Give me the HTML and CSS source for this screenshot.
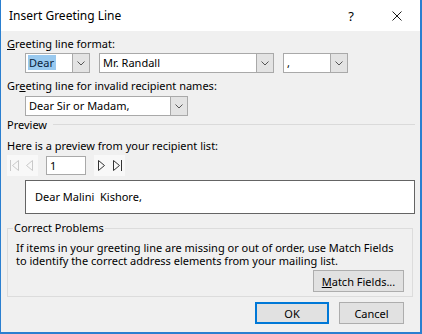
FILE: index.html
```html
<!DOCTYPE html>
<html>
    <head>
        <meta charset="utf-8">
        <link rel="stylesheet" href="styles.css">
        <title>Insert Greeting Line</title>
    </head>
    <body>
        <div class="dialog">

            <div class="titlebar">
                <span class="title">Insert Greeting Line</span>
                <span class="caption-btn">?</span>
                <span class="caption-btn">
                    <svg width="10" height="10" viewBox="0 0 10 10"><path d="M0.5,0.5 L9.5,9.5 M9.5,0.5 L0.5,9.5" stroke="#1a1a1a" stroke-width="1" fill="none"/></svg>
                </span>
            </div>

            <div class="content">
                <div class="label label-top"><u>G</u>reeting line format:</div>
                <div class="combo-row">
                    <div class="combo combo-salutation">
                        <span class="combo-text"><span class="selected">Dear</span></span>
                        <span class="combo-btn"><svg width="8" height="5" viewBox="0 0 8 5"><polyline points="0.5,0.5 4,4 7.5,0.5" stroke="#555" fill="none"/></svg></span>
                    </div>
                    <div class="combo combo-name">
                        <span class="combo-text">Mr. Randall</span>
                        <span class="combo-btn"><svg width="8" height="5" viewBox="0 0 8 5"><polyline points="0.5,0.5 4,4 7.5,0.5" stroke="#555" fill="none"/></svg></span>
                    </div>
                    <div class="combo combo-punct">
                        <span class="combo-text">,</span>
                        <span class="combo-btn"><svg width="8" height="5" viewBox="0 0 8 5"><polyline points="0.5,0.5 4,4 7.5,0.5" stroke="#555" fill="none"/></svg></span>
                    </div>
                </div>

                <div class="label label-invalid">Gr<u>e</u>eting line for invalid recipient names:</div>
                <div class="combo-row combo-row-invalid">
                    <div class="combo combo-invalid">
                        <span class="combo-text">Dear Sir or Madam,</span>
                        <span class="combo-btn"><svg width="8" height="5" viewBox="0 0 8 5"><polyline points="0.5,0.5 4,4 7.5,0.5" stroke="#555" fill="none"/></svg></span>
                    </div>
                </div>

                <div class="section-head">Preview</div>
                <div class="label label-preview">Here is a preview from your recipient list:</div>

                <div class="nav">
                    <div class="nav-group nav-back">
                        <svg width="9" height="11" viewBox="0 0 9 11"><path d="M0.5,0 V11 M8.5,0.5 L2.5,5.5 L8.5,10.5 Z" stroke="#c9c9c9" fill="none"/></svg>
                        <svg width="7" height="11" viewBox="0 0 7 11"><path d="M6.5,0.5 L0.5,5.5 L6.5,10.5 Z" stroke="#c9c9c9" fill="none"/></svg>
                    </div>
                    <div class="page-box">1</div>
                    <div class="nav-group nav-forward">
                        <svg width="7" height="11" viewBox="0 0 7 11"><path d="M0.5,0.5 L6.5,5.5 L0.5,10.5 Z" stroke="#333" fill="none"/></svg>
                        <svg width="9" height="11" viewBox="0 0 9 11"><path d="M0.5,0.5 L6.5,5.5 L0.5,10.5 Z M8.5,0 V11" stroke="#333" fill="none"/></svg>
                    </div>
                </div>

                <div class="preview">Dear Malini&nbsp; Kishore,</div>

                <fieldset class="group">
                    <legend>Correct Problems</legend>
                    <p>If items in your greeting line are missing or out of order, use Match Fields to identify the correct address elements from your mailing list.</p>
                    <div class="group-actions">
                        <button class="btn btn-match"><u>M</u>atch Fields...</button>
                    </div>
                </fieldset>

                <div class="actions">
                    <button class="btn btn-ok">OK</button>
                    <button class="btn btn-cancel">Cancel</button>
                </div>
            </div>

        </div>
    </body>
</html>
```

FILE: styles.css
```css
* {
    box-sizing: border-box;
}

body {
    margin: 0;
    font-family: "Noto Sans", "Open Sans", Arial, sans-serif;
    font-size: 11px;
    color: #000000;
}

.dialog {
    width: 422px;
    height: 334px;
    background: #f0f0f0;
    border: 1px solid #2a7fd0;
    border-top: 0;
    border-right-width: 2px;
    border-bottom-width: 2px;
}

.titlebar {
    height: 31px;
    background: #ffffff;
    display: flex;
    align-items: center;
    padding-left: 8px;
    font-size: 12px;
}

.title {
    flex: 1;
}

.caption-btn {
    width: 46px;
    height: 31px;
    display: flex;
    align-items: center;
    justify-content: center;
    font-size: 13px;
}

.content {
    padding: 0 5px 0 6px;
}

.label {
    line-height: 14px;
}

.label-top {
    margin-top: 6px;
}

.label-invalid {
    margin-top: 6px;
}

.label-preview {
    margin-top: 7px;
}

.combo-row {
    display: flex;
    gap: 9px;
    margin-top: 2px;
    padding-left: 18px;
}

.combo-row-invalid {
    margin-top: 3px;
}

.combo {
    display: flex;
    height: 20px;
    background: #ffffff;
    border: 1px solid #a9a9a9;
}

.combo-salutation { width: 65px; }
.combo-name { width: 175px; }
.combo-punct { width: 65px; }
.combo-invalid { width: 163px; }

.combo-text {
    flex: 1;
    padding-left: 3px;
    line-height: 18px;
    white-space: nowrap;
    overflow: hidden;
}

.selected {
    display: inline-block;
    background: #99c9ef;
    color: #0a1e3c;
    padding: 0 1px;
    margin-left: -1px;
    line-height: 15px;
    width: 28px;
}

.combo-btn {
    width: 17px;
    background: #e3e3e3;
    border-left: 1px solid #a9a9a9;
    display: flex;
    align-items: center;
    justify-content: center;
}

.section-head {
    display: flex;
    align-items: center;
    gap: 6px;
    margin-top: 2px;
    line-height: 14px;
}

.section-head::after {
    content: "";
    flex: 1;
    border-top: 1px solid #dadada;
    margin-top: -1px;
}

.nav {
    display: flex;
    align-items: center;
    gap: 8px;
    margin-top: 2px;
    height: 21px;
}

.nav-group {
    width: 31px;
    height: 21px;
    background: #f8f8f8;
    display: flex;
    align-items: center;
}

.nav-back {
    padding-left: 3px;
    gap: 7px;
}

.nav-forward {
    padding-left: 4px;
    gap: 8px;
}

.page-box {
    width: 40px;
    height: 19px;
    background: #ffffff;
    border: 1px solid #a9a9a9;
    padding-left: 3px;
    line-height: 17px;
}

.preview {
    margin: 4px 0 0 18px;
    height: 34px;
    background: #ffffff;
    border: 1px solid #646464;
    padding-left: 9px;
    line-height: 32px;
}

.group {
    margin: 7px 2px 0 0;
    padding: 0 8px 4px 0;
    border: 1px solid #dcdcdc;
    min-width: 0;
}

.group legend {
    margin-left: 5px;
    padding: 0 1px;
    line-height: 14px;
}

.group p {
    margin: 6px 0 0 8px;
    line-height: 13px;
}

.group-actions {
    display: flex;
    justify-content: flex-end;
    margin-top: 3px;
}

.btn {
    height: 22px;
    font-family: inherit;
    font-size: 11px;
    color: #000000;
    background: #e1e1e1;
    border: 1px solid #adadad;
    padding: 0;
}

.btn-match {
    width: 91px;
}

.actions {
    display: flex;
    justify-content: flex-end;
    gap: 10px;
    margin: 5px 11px 0 0;
}

.btn-ok {
    width: 74px;
    border: 2px solid #0078d7;
}

.btn-cancel {
    width: 65px;
}
```
